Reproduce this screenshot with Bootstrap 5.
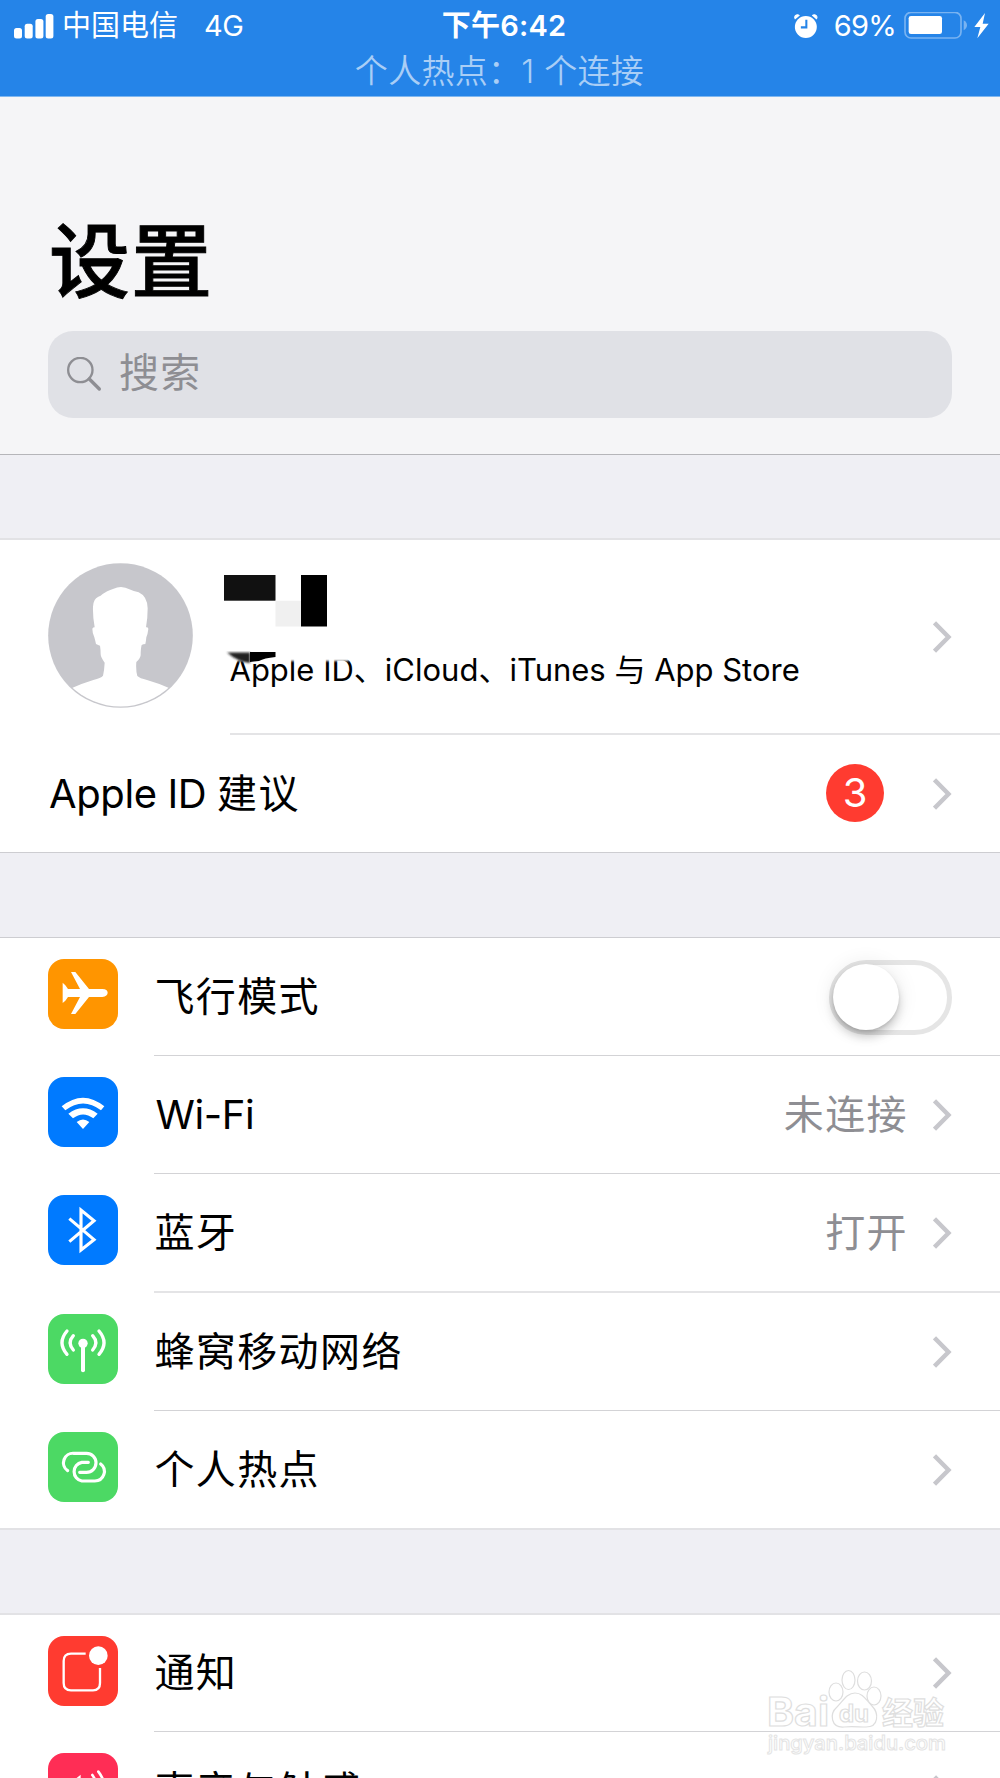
<!DOCTYPE html>
<html lang="zh-CN">
<head>
<meta charset="utf-8">
<meta name="viewport" content="width=device-width, initial-scale=1">
<title>设置</title>
<link href="https://cdn.jsdelivr.net/npm/bootstrap@5.3.0/dist/css/bootstrap.min.css" rel="stylesheet">
<style>
body{font-family:Inter,"Noto Sans CJK SC",sans-serif;background:#efeff4;color:#000;font-size:40px;line-height:1.2;overflow:hidden}
svg{display:block;flex:none}
.screen{width:1000px;height:1778px}
.statusbar{height:97px;background:#2584e8;color:#fff;font-size:29px;padding:5px 10px 0 14px;border-bottom:1px solid #7fb7f0}
.status-line{height:42px;line-height:42px}
.side{flex:1 1 0}
.carrier{margin-left:8px}
.net{margin-left:26px;letter-spacing:-.6px}
.time{letter-spacing:.2px;padding-left:4px}
.pct{margin:0 8px 0 16px;letter-spacing:-.7px}
.hotspot-line{font-size:33px;font-weight:350;line-height:48px;color:#a9cef6;letter-spacing:.3px;padding-right:5px}
.page-head{height:358px;background:#f5f5f7;border-bottom:1px solid #b5b5b9;padding:115px 48px 0}
.page-title{font-size:81px;font-weight:500;line-height:100px;margin:0 0 19px 1px;letter-spacing:1px;-webkit-text-stroke:.9px #000}
.search-box{height:87px;border-radius:25px;background:#e0e1e6;color:#8e8e93;padding-left:19px;letter-spacing:1.2px}
.search-text{margin:-3px 0 0 17px}
.group{background:#fff;margin-top:84px;border-top:1px solid #cdcdd1}
.soft-top{border-top:2px solid #e2e2e5;margin-top:83px}
.item{height:118px;padding-left:48px}
.item-short{height:117px}
.item-body{padding-right:48px;border-bottom:1px solid #d3d3d6}
.soft .item-body{border-bottom:2px solid #e4e4e6}
.soft{height:119px}
.last-row .item-body{border:0}
.last-row{border-bottom:1px solid #cdcdd1}
.last-row.soft{border-bottom:2px solid #e2e2e5}
.icon-tile{width:70px;height:70px;border-radius:16px;margin:21px 36px 0 .4px;overflow:hidden}
.label-text{letter-spacing:1.4px}
.latin{letter-spacing:-.4px;padding-left:1px}
.value-text{color:#8e8e93;letter-spacing:1.4px;margin-right:25px}
.bg-orange{background:#ff9500}.bg-sky{background:#007aff}.bg-leaf{background:#4cd964}.bg-alert{background:#ff3b30}.bg-rose{background:#ff2d55}
.avatar{margin-top:23px}
.profile{height:195px;padding-left:48px}
.profile-body{margin-left:36.5px;padding-right:48px;border-bottom:2px solid #e4e4e6}
.profile-desc{font-size:31px;padding-top:111px;white-space:nowrap}
.mosaic{left:-6px;top:35px}
.count{width:58px;height:58px;background:#ff3b30;font-size:40px;font-weight:400;margin:0 49px 2px 0;padding:0}
.toggle{width:123px;height:75px;border:5px solid #e5e5e5;border-radius:38px;margin-bottom:-1px}
.knob{width:66px;height:66px;margin:-.5px -1px;border-radius:50%;background:#fff;box-shadow:0 7px 10px rgba(0,0,0,.18),0 2px 3px rgba(0,0,0,.1),0 0 22px rgba(0,0,0,.09)}
.watermark{left:765px;top:1668px}
</style>
</head>
<body>
<svg width="0" height="0" class="position-absolute"><defs><symbol id="chev" viewBox="0 0 19 32"><path d="M1.500 1.800 15.500 16 1.500 30.200" fill="none" stroke="#c7c7cc" stroke-width="4.400"/></symbol></defs></svg>
<main class="screen position-relative overflow-hidden">
  <header class="statusbar">
    <div class="status-line d-flex align-items-center">
      <div class="side d-flex align-items-center">
        <svg width="40" height="25" viewBox="0 0 40 25" fill="#fff"><rect y="14" width="8" height="10.500" rx="2.500"/><rect x="10.700" y="9.700" width="8" height="14.800" rx="2.500"/><rect x="21.400" y="5" width="8" height="19.500" rx="2.500"/><rect x="31.700" y="0" width="7.700" height="24.500" rx="2.500"/></svg>
        <span class="carrier">中国电信</span><span class="net">4G</span>
      </div>
      <div class="fw-semibold time">下午6:42</div>
      <div class="side d-flex align-items-center justify-content-end">
        <svg width="24" height="24" viewBox="888 37 70 70"><circle cx="922.500" cy="75" r="32" fill="#fff"/><path d="M892 52 Q888 46 892 42 Q898 37 904 42M953 52 Q957 46 953 42 Q947 37 941 42" fill="#fff" stroke="#fff" stroke-width="3"/><path d="M924 54V76H908" fill="none" stroke="#2584e8" stroke-width="6"/></svg>
        <span class="pct">69%</span>
        <svg width="86" height="28" viewBox="1210 33 258 84"><rect x="1213" y="34" width="168" height="77" rx="18" fill="none" stroke="#79b3f1" stroke-width="5"/><rect x="1224" y="45" width="100" height="54" rx="7" fill="#fff"/><path d="M1389 58Q1399 64 1399 73Q1399 82 1389 88Z" fill="#79b3f1"/><path d="M1453 36 1421 78H1439L1430 112 1464 68H1446Z" fill="#fff"/></svg>
      </div>
    </div>
    <div class="hotspot-line text-center">个人热点：1 个连接</div>
  </header>

  <section class="page-head">
    <h1 class="page-title">设置</h1>
    <div class="search-box d-flex align-items-center">
      <svg width="35" height="35" viewBox="202 471 105 105" fill="none" stroke="#8e8e93" stroke-linecap="round"><circle cx="242" cy="510" r="36.500" stroke-width="7"/><path d="M269 537 299 567" stroke-width="10"/></svg>
      <span class="search-text">搜索</span>
    </div>
  </section>

  <section class="group soft-top">
    <div class="profile d-flex">
      <svg class="avatar" width="145" height="145" viewBox="145 98 435 435">
        <defs><clipPath id="face"><circle cx="362.500" cy="315.500" r="213"/></clipPath></defs>
        <circle cx="362.500" cy="315.500" r="217" fill="#c7c7cc"/>
        <path clip-path="url(#face)" fill="#fff" d="M285 291Q279 260 280 229Q281 205 296 199Q303 198 309 191Q320 182 342 175Q352 170 364 170Q378 171 389 177Q402 183 417 186Q443 198 444 234Q444 265 439 291Q446 289 446 296Q444 313 440 321Q439 333 437 341Q431 341 426 344Q423 354 423 375Q422 384 410 395Q408 420 413 437Q420 444 442 449Q480 460 508 473L580 533H145L217 473Q245 460 281 449Q304 443 310 436Q314 418 315 397Q303 381 303 372Q303 358 301 346Q296 345 289 341Q287 332 284 321Q278 308 278 295Q280 291 285 291Z"/>
      </svg>
      <div class="profile-body position-relative d-flex flex-fill justify-content-between align-items-center">
        <div class="profile-desc align-self-start">Apple ID、iCloud、iTunes 与 App Store</div>
        <svg width="19" height="32"><use href="#chev"/></svg>
        <svg class="mosaic position-absolute" width="130" height="90" viewBox="0 0 130 90">
          <defs><filter id="soft"><feGaussianBlur stdDeviation="1"/></filter></defs>
          <rect y="62" width="125" height="24" fill="#fff" filter="url(#soft)"/>
          <rect width="51.500" height="25.700" fill="#111"/><rect x="51.500" y="25.700" width="25.500" height="25.800" fill="#f0f0f0"/><rect x="77" width="26" height="51.500"/>
          <path d="M3 77.500H26V88Q14 87 3 77.500Z" fill="#222" filter="url(#soft)"/><path d="M26 77H51.500V82Q40 83 35 86L26 87Z"/>
        </svg>
      </div>
    </div>
    <div class="item last-row d-flex">
      <div class="item-body d-flex flex-fill align-items-center">
        <span class="flex-fill label-text"><span class="latin">Apple ID </span>建议</span><span class="badge rounded-circle count d-flex align-items-center justify-content-center">3</span><svg width="19" height="32"><use href="#chev"/></svg>
      </div>
    </div>
  </section>

  <section class="group">
    <div class="item d-flex">
      <div class="icon-tile bg-orange"><svg width="70" height="70" viewBox="145 87 210 210"><path fill="#fff" d="M189 158 197 166 205 177H241L214 126H227L268 177H308Q324 178 324 188.500Q324 199 308 201H268L227 252H214L241 201H205L197 212 189 219Z"/></svg></div>
      <div class="item-body d-flex flex-fill align-items-center"><span class="flex-fill label-text">飞行模式</span><div class="toggle"><div class="knob"></div></div></div>
    </div>
    <div class="item d-flex">
      <div class="icon-tile bg-sky"><svg width="70" height="70" viewBox="145 442 210 210" fill="#fff"><path d="M186 530Q250 478 314 530L304 542Q250 501 197 542ZM206 552Q250 520 294 552L281 566Q250 543 220 566ZM231 577Q250 562 269 577L250 598Z"/></svg></div>
      <div class="item-body d-flex flex-fill align-items-center"><span class="flex-fill latin">Wi-Fi</span><span class="value-text">未连接</span><svg width="19" height="32"><use href="#chev"/></svg></div>
    </div>
    <div class="item soft d-flex">
      <div class="icon-tile bg-sky"><svg width="70" height="70" viewBox="145 77 210 210"><path fill="none" stroke="#fff" stroke-width="9.500" d="M209 148 283 211 244 242V122L283 154 209 217"/></svg></div>
      <div class="item-body d-flex flex-fill align-items-center"><span class="flex-fill label-text">蓝牙</span><span class="value-text">打开</span><svg width="19" height="32"><use href="#chev"/></svg></div>
    </div>
    <div class="item d-flex">
      <div class="icon-tile bg-leaf"><svg width="70" height="70" viewBox="145 432 210 210" fill="none" stroke="#fff" stroke-linecap="round" stroke-width="10"><circle cx="250" cy="520" r="14" fill="#fff" stroke="none"/><path d="M250 520V601" stroke-width="12"/><path d="M279 497Q298 518 279 540M221 497Q202 518 221 540M298 483Q328 518 298 553M202 483Q172 518 202 553"/></svg></div>
      <div class="item-body d-flex flex-fill align-items-center"><span class="flex-fill label-text">蜂窝移动网络</span><svg width="19" height="32"><use href="#chev"/></svg></div>
    </div>
    <div class="item soft last-row d-flex">
      <div class="icon-tile bg-leaf"><svg width="70" height="70" viewBox="145 786 210 210" fill="none" stroke="#fff" stroke-linecap="round" stroke-width="9.500"><path d="M204 902A28.500 28.500 0 0 1 222.500 850H260.500A28.500 28.500 0 0 1 260.500 907H240M303 882A28.500 28.500 0 0 1 285.500 933H246.500A28.500 28.500 0 0 1 246.500 877H266"/></svg></div>
      <div class="item-body d-flex flex-fill align-items-center"><span class="flex-fill label-text">个人热点</span><svg width="19" height="32"><use href="#chev"/></svg></div>
    </div>
  </section>

  <section class="group soft-top">
    <div class="item item-short d-flex">
      <div class="icon-tile bg-alert"><svg width="70" height="70" viewBox="145 137 210 210"><circle cx="296" cy="196" r="28" fill="#fff"/><path fill="none" stroke="#fff" stroke-width="7" d="M258 190H214Q192 190 192 212V278Q192 300 214 300H280Q301 300 301 278V233"/></svg></div>
      <div class="item-body d-flex flex-fill align-items-center"><span class="flex-fill label-text">通知</span><svg width="19" height="32"><use href="#chev"/></svg></div>
    </div>
    <div class="item d-flex">
      <div class="icon-tile bg-rose"><svg width="70" height="70" viewBox="145 490 210 210" fill="none" stroke="#fff" stroke-linecap="round" stroke-width="8"><path d="M296 546Q334 595 296 644M278 556Q306 595 278 634"/><path fill="#fff" stroke="none" d="M188 578H215L243 555V635L215 612H188Z"/></svg></div>
      <div class="item-body d-flex flex-fill align-items-center"><span class="flex-fill label-text">声音与触感</span><svg width="19" height="32"><use href="#chev"/></svg></div>
    </div>
  </section>

  <svg class="watermark position-absolute" width="190" height="90" viewBox="0 0 190 90" fill="#fff" stroke="#dedede" stroke-width="1.200">
    <g font-family="Inter, Noto Sans CJK SC, sans-serif" font-weight="700">
      <text x="2" y="58" font-size="40" textLength="62" lengthAdjust="spacingAndGlyphs">Bai</text>
      <ellipse cx="71" cy="24" rx="7" ry="9"/><ellipse cx="83.500" cy="12" rx="6.500" ry="9.500"/><ellipse cx="99.500" cy="13" rx="7" ry="9"/><ellipse cx="109" cy="28" rx="7" ry="9"/>
      <path d="M90 25C98 25 101 32 107 38C114 45 114 59 101 59C94 59 86 58 79 59C66 60 64 46 72 39C78 33 82 25 90 25Z"/>
      <text x="74" y="54" font-size="24" textLength="30" lengthAdjust="spacingAndGlyphs">du</text>
      <text x="117" y="56" font-size="31" textLength="62" lengthAdjust="spacingAndGlyphs">经验</text>
      <text x="3" y="82" font-size="20" font-weight="500" stroke="#e4e4e4" stroke-width="1" textLength="178" lengthAdjust="spacingAndGlyphs">jingyan.baidu.com</text>
    </g>
  </svg>
</main>
<script src="https://cdn.jsdelivr.net/npm/bootstrap@5.3.0/dist/js/bootstrap.bundle.min.js"></script>
</body>
</html>
